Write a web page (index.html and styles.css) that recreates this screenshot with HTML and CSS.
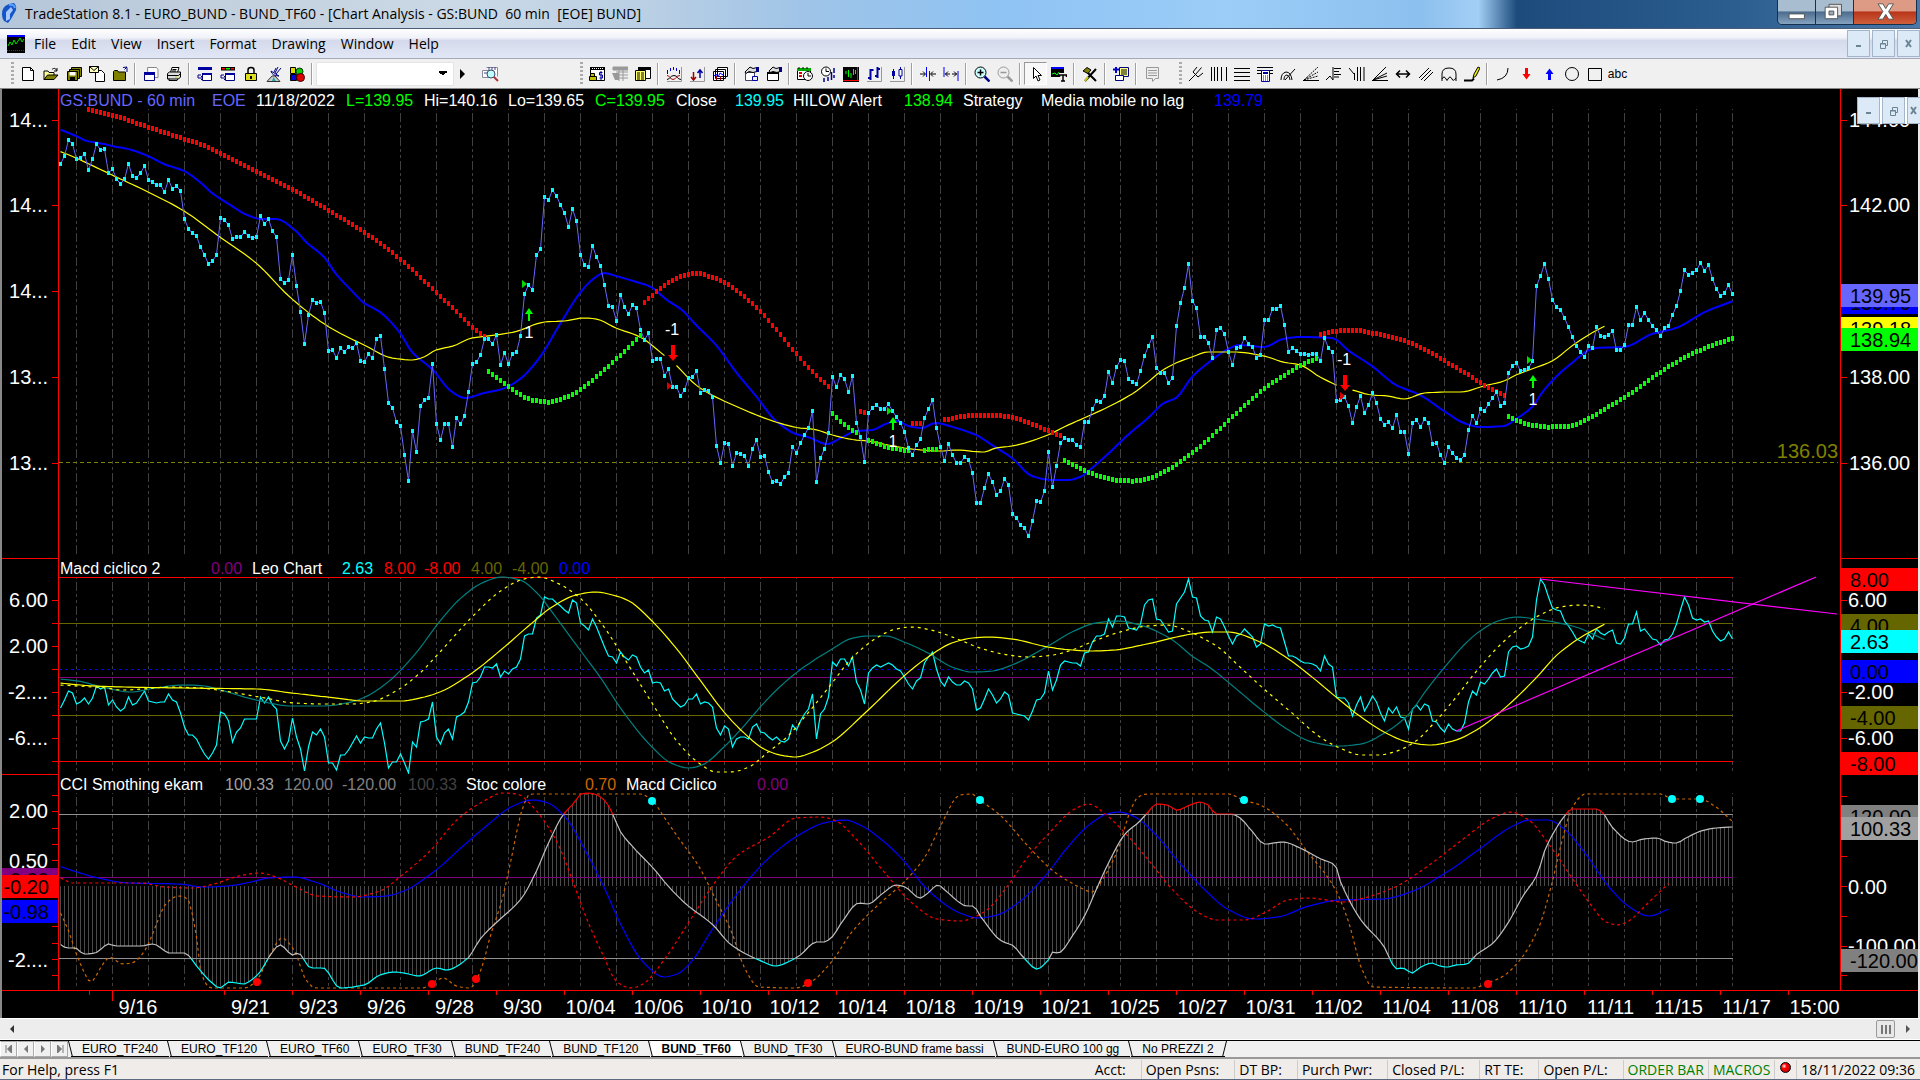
FILE: index.html
```html
<!DOCTYPE html>
<html lang="en">
<head>
<meta charset="utf-8">
<title>TradeStation 8.1 - EURO_BUND - BUND_TF60</title>
<link rel="stylesheet" href="styles.css">
</head>
<body>
<svg class="sprite" aria-hidden="true">
  <symbol id="i-new" viewBox="0 0 16 16"><path d="M2.500 1.500h8l3 3v10h-11z" fill="#fff" stroke="#000"/><path d="M10.500 1.500v3h3" fill="none" stroke="#000"/></symbol>
  <symbol id="i-open" viewBox="0 0 16 16"><path d="M1 13.500V5h4l1 1.500h5V9" fill="#ffff9c" stroke="#000"/><path d="M1 13.500L4.500 9H15l-4 4.500z" fill="#808000" stroke="#000"/><path d="M9 3.500c2-2 4-1 4.500 1M14 2v3h-3" fill="none" stroke="#000"/></symbol>
  <symbol id="i-saveall" viewBox="0 0 16 16"><path d="M5.500 1.500h10v9h-10z" fill="#808000" stroke="#000"/><path d="M3.500 3.500h10v9h-10z" fill="#808000" stroke="#000"/><path d="M1.500 5.500h10v9h-10z" fill="#808000" stroke="#000"/><path d="M3.500 6h6v3.500h-6z" fill="#fff"/><path d="M4 11h5v3.500H4z"/></symbol>
  <symbol id="i-mail" viewBox="0 0 16 16"><path d="M6.500 4.500h6l3 3v8h-9z" fill="#fff" stroke="#000"/><path d="M.500.500h9v6h-9z" fill="#ffffc0" stroke="#000"/><path d="M.500.500L5 4.500 9.500.500" fill="none" stroke="#000"/></symbol>
  <symbol id="i-folder" viewBox="0 0 16 16"><path d="M1.500 14.500v-9l1-1h3l1 1.500h7v8.500z" fill="#808000" stroke="#000"/><path d="M15 6V1.500M12.500 3.500L15 1l-4 .500" fill="none" stroke="#000080"/></symbol>
  <symbol id="i-win" viewBox="0 0 16 16"><path d="M4.500 1.500h9l1.500 2v8h-10z" fill="#fff" stroke="#888"/><path d="M1.500 6.500h10v8h-10z" fill="#fff" stroke="#000080"/><path d="M1 6h11v3H1z" fill="#0000a0"/></symbol>
  <symbol id="i-print" viewBox="0 0 16 16"><path d="M4.500 6.500l1.500-5h7l-1.500 5" fill="#fff" stroke="#000"/><path d="M1.500 7.500l2-1.500h11v5l-2 2h-11z" fill="#ddd" stroke="#000"/><path d="M1.500 9.500h11l2-2M3 12.500v2h8l1-2M6.500 3.500h4M6 5h4" fill="none" stroke="#000"/><path d="M9 11h2" stroke="#cc0"/></symbol>
  <symbol id="i-ws1" viewBox="0 0 16 16"><path d="M1 1h14v3H1z" fill="#0000a0"/><path d="M5.500 7.500h9v7h-9z" fill="#fff" stroke="#000080"/><path d="M5 7h10v2H5z" fill="#0000a0"/><path d="M1 12h5M1 12V9h3M4 10l2 2-2 2" fill="none" stroke="#000080"/></symbol>
  <symbol id="i-ws2" viewBox="0 0 16 16"><path d="M1 1h14v3.500H1z"/><path d="M2 2h3v1.500H2z" fill="#f00"/><path d="M6 2h4v1.500H6z" fill="#0f0"/><path d="M11 2h3v1.500h-3z" fill="#f00"/><path d="M5.500 7.500h9v7h-9z" fill="#fff" stroke="#000080"/><path d="M5 7h10v2H5z" fill="#0000a0"/><path d="M1 12h5M1 12V9h3M4 10l2 2-2 2" fill="none" stroke="#000080"/></symbol>
  <symbol id="i-lock" viewBox="0 0 16 16"><path d="M5 7V4q0-2.500 3-2.500T11 4v3" fill="none" stroke="#000" stroke-width="1.500"/><path d="M2.500 7.500h11v7h-11z" fill="#dede20" stroke="#000"/><path d="M7 10h2v3H7z"/></symbol>
  <symbol id="i-dish" viewBox="0 0 16 16"><path d="M1 15.500l5-5.500h3l5 5.500z" fill="#ccc" stroke="#333"/><path d="M6 15l1.500-4L10 15z" fill="#2aa"/><path d="M5 5q1 5 8 5zM9 7l3-6M10 8l5-6M8 6l2-4" fill="#eee" stroke="#000080"/></symbol>
  <symbol id="i-balls" viewBox="0 0 16 16"><path d="M1.500 1.500h5v6h-5z" fill="#dd0" stroke="#000"/><circle cx="10.500" cy="5.500" r="3.500" fill="#0c0" stroke="#030"/><path d="M1.500 8.500h6v6h-6z" fill="#00d" stroke="#000"/><circle cx="11.500" cy="11.500" r="4" fill="#d00" stroke="#300"/></symbol>
  <symbol id="i-find" viewBox="0 0 18 18"><path d="M1.500 5.500h7v7h-7zM5.500 2.500h11v9" fill="#fff" stroke="#889"/><path d="M8 2v3M11 2v3M14 2v3M3 8h4" stroke="#448"/><circle cx="10" cy="9" r="4" fill="#bff" stroke="#446"/><path d="M13 12l4 4" stroke="#a33" stroke-width="2"/></symbol>
  <symbol id="i-symmoney" viewBox="0 0 16 16"><path d="M1.500 1.500h14v13h-14z" fill="#fff" stroke="#000"/><path d="M1 1h15v3H1z"/><path d="M3 2.500h12" stroke="#fff" stroke-dasharray="1 1"/><path d="M13.500 6.500h-3v2.500h3V12h-3M12 5v9" fill="none" stroke="#0000a0"/><path d="M1.500 7.500h4v3h-4zM.500 10.500h7v4h-7z" fill="#c0c000" stroke="#000"/></symbol>
  <symbol id="i-symgray" viewBox="0 0 16 16"><path d="M1 1h15v3H1zM4 6h12M4 9h12M4 12h12M7 4v11M11 4v11" fill="#999" stroke="#999"/><path d="M0 7h7v7H3z" fill="#999"/></symbol>
  <symbol id="i-symlist" viewBox="0 0 16 16"><path d="M3.500 1.500h12v11h-12z" fill="#fff" stroke="#000"/><path d="M3 1h13v3H3z"/><path d="M.500 4.500h10v10H.500z" fill="#ffff70" stroke="#000"/><path d="M2 7h7M2 9h7M2 11h7M2 13h7" stroke="#000" stroke-dasharray="3 1"/></symbol>
  <symbol id="i-ind1" viewBox="0 0 16 16"><path d="M15.500 1v14.500H1" fill="none" stroke="#999"/><path d="M1.500 4v4M4.500 2v3M7.500 1v3M10.500 2v3M13.500 4v4" stroke="#00c"/><path d="M1 9.500c3 0 3 4 6 4s3-4 7-4" fill="none" stroke="#a00"/><path d="M1 13.500c3 0 3-4 7-4s3 4 7 4" fill="none" stroke="#000"/></symbol>
  <symbol id="i-ind2" viewBox="0 0 16 16"><path d="M15.500 1v14.500H1" fill="none" stroke="#999"/><path d="M4.500 6v8M2 11l2.500 3L7 11" fill="none" stroke="#a00000" stroke-width="1.500"/><path d="M11 12V4M8.500 7L11 4l2.500 3" fill="none" stroke="#0000a0" stroke-width="1.500"/></symbol>
  <symbol id="i-ind3" viewBox="0 0 16 16"><path d="M5.500 1.500h10v9h-10zM3.500 3.500h10v9h-10zM1.500 5.500h10v9h-10z" fill="#fff" stroke="#000"/><path d="M2 10l2-2 2 3 2-4 3 2" fill="none" stroke="#00f"/><path d="M4.500 10v4M8.500 14v-4" stroke="#a00"/></symbol>
  <symbol id="i-hand1" viewBox="0 0 16 16"><path d="M2.500 6.500h9v8h-9z" fill="#fff" stroke="#446"/><path d="M2 6l5-5 3 1.500 4-1v4l-4 1-4-1-3 2z" fill="#ddd" stroke="#000"/><path d="M13 1h3v5h-3z" fill="#000080"/><path d="M9.500 10.500h5v4h-5z" fill="#eef" stroke="#00a"/></symbol>
  <symbol id="i-hand2" viewBox="0 0 16 16"><path d="M1.500 7.500h11v7h-11z" fill="#fff" stroke="#000"/><path d="M1 6h12v2H1z"/><path d="M3 5l4-4 3 1.500 4-1v4l-3 1-4-1-3 1z" fill="#ddd" stroke="#000"/><path d="M13 1h3v5h-3z" fill="#000080"/></symbol>
  <symbol id="i-cal" viewBox="0 0 16 16"><path d="M.500 2.500h13v11H.500z" fill="#fff" stroke="#000"/><path d="M0 2h14v3H0z" fill="#0a0"/><path d="M2 7h3M2 10h3" stroke="#d00" stroke-width="2"/><circle cx="11" cy="10" r="4.500" fill="#fff" stroke="#000"/><path d="M11 7v3h3M2 1v2M6 1v2M10 1v2" fill="none" stroke="#000"/></symbol>
  <symbol id="i-clock" viewBox="0 0 16 16"><circle cx="6" cy="5.500" r="4.500" fill="#fff" stroke="#000"/><path d="M6 2.500v3h3" fill="none" stroke="#000"/><path d="M14 2v5M11.500 6v8M8 11v4M4 12v4M14 9v3" stroke="#000090" stroke-width="1.500"/></symbol>
  <symbol id="i-chart" viewBox="0 0 16 16"><path d="M0 1h16v15H0z"/><path d="M14.500 1v14M0 14.500h16" stroke="#f00"/><path d="M3 5v3M5.500 4v7M8 7v5M10.500 3v6M12.500 4v4" stroke="#0f0"/></symbol>
  <symbol id="i-bars" viewBox="0 0 16 16"><path d="M15.500 1v14.500H1" fill="none" stroke="#999"/><path d="M4.500 3v11M2 12h3M4 4h3.500M11.500 1v11M9 10h3M11 3h3" stroke="#0000a0" stroke-width="2"/></symbol>
  <symbol id="i-candle" viewBox="0 0 16 16"><path d="M15.500 1v14.500H1" fill="none" stroke="#999"/><path d="M4.500 3v10M11.500 1v12" stroke="#0000a0"/><path d="M3 5h3v5H3z" fill="#0000a0"/><path d="M10 3.500h3V10h-3z" fill="#fff" stroke="#0000a0"/></symbol>
  <symbol id="i-squeeze" viewBox="0 0 16 16"><path d="M6.500 1v10M9.500 5v10" stroke="#00f"/><path d="M0 8h5M3 5.500L5.500 8 3 10.500M16 8h-5M13 5.500L10.500 8l2.500 2.500" fill="none" stroke="#000"/></symbol>
  <symbol id="i-stretch" viewBox="0 0 16 16"><path d="M1 1v10M15 5v10" stroke="#00f"/><path d="M2 8h5M5 5.500L2.500 8 5 10.500M14 8H9M11 5.500L13.500 8 11 10.500" fill="none" stroke="#000"/></symbol>
  <symbol id="i-zoomin" viewBox="0 0 16 16"><circle cx="6.500" cy="6.500" r="5.500" fill="#cff" stroke="#000"/><path d="M3.500 6.500h6M6.500 3.500v6" stroke="#000" stroke-width="1.500"/><path d="M10.500 10.500l5 5" stroke="#000080" stroke-width="2.500"/></symbol>
  <symbol id="i-zoomout" viewBox="0 0 16 16"><circle cx="6.500" cy="6.500" r="5.500" fill="#eee" stroke="#999"/><path d="M3.500 6.500h6" stroke="#999" stroke-width="1.500"/><path d="M10.500 10.500l5 5" stroke="#999" stroke-width="2.500"/></symbol>
  <symbol id="i-pointer" viewBox="0 0 16 16"><path d="M5.500 1.500v11l2.500-2.500 2 5 2-1-2-4.500h3.500z" fill="#fff" stroke="#000"/></symbol>
  <symbol id="i-charttext" viewBox="0 0 16 16"><path d="M0 1h13v10H0z"/><path d="M0 1h13v2H0z" fill="#00f"/><path d="M1 8l3-1 2 2 2-3" fill="none" stroke="#0f0"/><path d="M8 7h8v9H8z" fill="#f0f0f0"/><path d="M8.500 11V9h7v2M12 9v6M10 15h4" fill="none" stroke="#000" stroke-width="1.500"/></symbol>
  <symbol id="i-tools" viewBox="0 0 16 16"><path d="M3 15L14 3M5 6l9 9" stroke="#000" stroke-width="2"/><path d="M1 5l4-3.500 4 2.500-3 3.500z" fill="#808000" stroke="#000"/><path d="M3 15l3-4" stroke="#cc0" stroke-width="2"/></symbol>
  <symbol id="i-addlist" viewBox="0 0 16 16"><path d="M6.500 1.500h9v9h-9z" fill="#ffff80" stroke="#000080"/><path d="M8 4h6M8 6h6M8 8h6" stroke="#000"/><path d="M0 3.500h6M3 1v6" stroke="#00c" stroke-width="2"/><path d="M2.500 9.500h8v5h-8z" fill="#fff" stroke="#000080"/></symbol>
  <symbol id="i-note" viewBox="0 0 16 16"><path d="M2.500 1.500h12v11h-3l-3 3v-3h-6z" fill="#eee" stroke="#999"/><path d="M4 4.500h9M4 7h9M4 9.500h9" stroke="#999"/></symbol>
  <symbol id="i-fork" viewBox="0 0 16 16"><path d="M1 15L8 8M5 6l5 5M5 6l4-5M7.500 8.500l6-7M10 11l5-4" fill="none" stroke="#000"/></symbol>
  <symbol id="i-vlines" viewBox="0 0 16 16"><path d="M.500 1v14M3.500 1v14M6.500 1v14M10.500 1v14M15.500 1v14" stroke="#000"/></symbol>
  <symbol id="i-hlines" viewBox="0 0 16 16"><path d="M0 2.500h16M0 6.500h16M0 10.500h16M0 14.500h16" stroke="#000"/></symbol>
  <symbol id="i-calc" viewBox="0 0 16 16"><path d="M0 1.500h16M0 4.500h16M0 7.500h16" stroke="#000"/><path d="M4.500 4.500h8v11h-8z" fill="#fff" stroke="#0000a0"/><path d="M6 6h5v2H6z" fill="#0000a0"/><path d="M6 10h5M6 12h5M6 14h5" stroke="#0000a0" stroke-dasharray="1 1"/></symbol>
  <symbol id="i-arcs" viewBox="0 0 16 16"><path d="M1 14q0-7 5-8 5 0 6 8M4 14q0-5 3-5 3 1 3 5M5 14L15 3" fill="none" stroke="#000"/></symbol>
  <symbol id="i-fan" viewBox="0 0 16 16"><path d="M0 14.500h16" stroke="#000"/><path d="M1 14L15 1M1 14l14-8M1 14l14-4" stroke="#000" stroke-dasharray="2 1"/></symbol>
  <symbol id="i-ext" viewBox="0 0 16 16"><path d="M0 14l4-4 3 4V1M8 2.500h7M8 5.500h5M8 8.500h7M8 11h5" fill="none" stroke="#000"/></symbol>
  <symbol id="i-timeext" viewBox="0 0 16 16"><path d="M0 2l5 6M5.500 14V7M8.500 1v14M11.500 1v14M15 1v14" fill="none" stroke="#000"/></symbol>
  <symbol id="i-gann" viewBox="0 0 16 16"><path d="M0 14.500h16M1 14L14 1M1 14l14-7M1 14l14-4" stroke="#000"/></symbol>
  <symbol id="i-harrow" viewBox="0 0 16 16"><path d="M1 8h14M5 4.500L1.500 8 5 11.500M11 4.500L14.500 8 11 11.500" fill="none" stroke="#000" stroke-width="1.500"/></symbol>
  <symbol id="i-parallel" viewBox="0 0 16 16"><path d="M1 12L11 2M3 14L13 4M6 15l9-9" stroke="#000"/></symbol>
  <symbol id="i-cycle" viewBox="0 0 16 16"><path d="M1 15V8q0-6 7-6t7 6v7M1 13q2-4 4 0 1 3 2 0 2-4 4 0 1 3 4-1" fill="none" stroke="#000"/></symbol>
  <symbol id="i-pencil" viewBox="0 0 16 16"><path d="M0 14.500h8l2-2" fill="none" stroke="#000" stroke-width="2"/><path d="M9 12l1-4 4-7 2 1-4 8z" fill="#ee0" stroke="#000"/></symbol>
  <symbol id="i-arc" viewBox="0 0 16 16"><path d="M13 2q0 10-11 12" fill="none" stroke="#000"/></symbol>
  <symbol id="i-down" viewBox="0 0 16 16"><path d="M7 2h3v6h2.500L8.500 13.500 4.500 8H7z" fill="#f00"/></symbol>
  <symbol id="i-up" viewBox="0 0 16 16"><path d="M7 14h3V8h2.500L8.500 2.500 4.500 8H7z" fill="#00f"/></symbol>
  <symbol id="i-circle" viewBox="0 0 16 16"><circle cx="8" cy="8" r="6.500" fill="none" stroke="#000"/></symbol>
  <symbol id="i-rect" viewBox="0 0 16 16"><path d="M1.500 2.500h13v12h-13z" fill="none" stroke="#000"/></symbol>
  <symbol id="w-min" viewBox="0 0 12 12"><path d="M3 7h5v2H3z" fill="#6b8494"/></symbol>
  <symbol id="w-res" viewBox="0 0 12 12"><path d="M4.500 5V2.500h5v5H8M2.500 5.500h5v5h-5zM2 6h6" fill="none" stroke="#6b8494"/></symbol>
  <symbol id="w-close" viewBox="0 0 12 12"><path d="M3 2l5 7M8 2L3 9" stroke="#6b8494" stroke-width="2"/></symbol>
</svg>

<header class="titlebar">
  <svg class="logo" viewBox="0 0 18 22" aria-hidden="true"><path d="M2 12Q1 4 9 1l5-1q4 4 1 9l-4 7-3 4-4-2q-2-3-2-6z" fill="#1456c8"/><path d="M6 18V9l5-5 2 3-3 4v5z" fill="#a8c8ff"/><path d="M9 2q5-1 6 3" fill="none" stroke="#58a0ff" stroke-width="2"/></svg>
  <h1>TradeStation 8.1 - EURO_BUND - BUND_TF60 - [Chart Analysis - GS:BUND&nbsp; 60 min&nbsp; [EOE] BUND]</h1>
  <div class="winbuttons">
    <button aria-label="Minimize"><svg viewBox="0 0 36 25"><path d="M10.500 14.500h16v5h-16z" fill="#fff" stroke="#555"/></svg></button>
    <button aria-label="Restore"><svg viewBox="0 0 36 25"><path d="M12.500 4.500h13v12h-13z" fill="#ddd" stroke="#555"/><path d="M8.500 7.500h13v12h-13z" fill="#fff" stroke="#555"/><path d="M12.500 11.500h5v4h-5z" fill="#9ab" stroke="#555"/></svg></button>
    <button class="close" aria-label="Close"><svg viewBox="0 0 60 25"><path d="M23 4h5l3 5 3-5h5l-5 8 5 8h-5l-3-5-3 5h-5l5-8z" fill="#fff" stroke="#555"/></svg></button>
  </div>
</header>

<nav class="menubar">
  <svg class="mdi-icon" viewBox="0 0 18 18" aria-hidden="true"><path d="M0 0h18v18H0z"/><path d="M0 0h18v2H0z" fill="#00f"/><path d="M0 15.500h18" stroke="#c00" stroke-dasharray="1 1"/><path d="M1 11l2-4 2 3 2-5 2 4 2-3 2-3 2 4 2-3" fill="none" stroke="#0d0"/></svg>
  <button>File</button><button>Edit</button><button>View</button><button>Insert</button><button>Format</button><button>Drawing</button><button>Window</button><button>Help</button>
  <div class="mdi">
    <button aria-label="Minimize chart"><svg><use href="#w-min"/></svg></button><button aria-label="Restore chart"><svg><use href="#w-res"/></svg></button><button aria-label="Close chart"><svg><use href="#w-close"/></svg></button>
  </div>
</nav>

<div class="toolbars">
  <div class="toolbar main">
    <i class="grip"></i>
    <button aria-label="New"><svg><use href="#i-new"/></svg></button><button aria-label="Open"><svg><use href="#i-open"/></svg></button><button aria-label="Save all"><svg><use href="#i-saveall"/></svg></button><button aria-label="Import"><svg><use href="#i-mail"/></svg></button><button aria-label="Close folder"><svg><use href="#i-folder"/></svg></button>
    <i class="sep"></i>
    <button aria-label="New window"><svg><use href="#i-win"/></svg></button><button aria-label="Print"><svg><use href="#i-print"/></svg></button>
    <i class="sep"></i>
    <button aria-label="Arrange"><svg><use href="#i-ws1"/></svg></button><button aria-label="Arrange colors"><svg><use href="#i-ws2"/></svg></button><button aria-label="Lock"><svg><use href="#i-lock"/></svg></button><button aria-label="Data feed"><svg><use href="#i-dish"/></svg></button><button aria-label="Objects"><svg><use href="#i-balls"/></svg></button>
    <i class="sep"></i>
    <select aria-label="Symbol"><option></option></select>
    <button class="go" aria-label="Go"><svg viewBox="0 0 8 12"><path d="M1 1l5 5-5 5z"/></svg></button>
    <button class="lookup" aria-label="Symbol lookup"><svg><use href="#i-find"/></svg></button>
  </div>
  <div class="toolbar analysis">
    <i class="grip"></i>
    <button aria-label="Trading"><svg><use href="#i-symmoney"/></svg></button><button aria-label="Grid" disabled><svg><use href="#i-symgray"/></svg></button><button aria-label="List"><svg><use href="#i-symlist"/></svg></button>
    <i class="sep"></i>
    <button aria-label="Indicator"><svg><use href="#i-ind1"/></svg></button><button aria-label="Signals"><svg><use href="#i-ind2"/></svg></button><button aria-label="Studies"><svg><use href="#i-ind3"/></svg></button>
    <i class="sep"></i>
    <button aria-label="Format symbol"><svg><use href="#i-hand1"/></svg></button><button aria-label="Format window"><svg><use href="#i-hand2"/></svg></button>
    <i class="sep"></i>
    <button aria-label="Sessions"><svg><use href="#i-cal"/></svg></button><button aria-label="Interval"><svg><use href="#i-clock"/></svg></button><button aria-label="Chart"><svg><use href="#i-chart"/></svg></button><button aria-label="Bars"><svg><use href="#i-bars"/></svg></button><button aria-label="Candles"><svg><use href="#i-candle"/></svg></button>
    <i class="sep"></i>
    <button aria-label="Decrease spacing"><svg><use href="#i-squeeze"/></svg></button><button aria-label="Increase spacing"><svg><use href="#i-stretch"/></svg></button>
    <i class="sep"></i>
    <button aria-label="Zoom in"><svg><use href="#i-zoomin"/></svg></button><button aria-label="Zoom out" disabled><svg><use href="#i-zoomout"/></svg></button>
    <i class="sep"></i>
    <button class="pressed" aria-label="Pointer"><svg><use href="#i-pointer"/></svg></button><button aria-label="Chart text"><svg><use href="#i-charttext"/></svg></button>
    <i class="sep"></i>
    <button aria-label="Tools"><svg><use href="#i-tools"/></svg></button>
    <i class="sep"></i>
    <button aria-label="Add list"><svg><use href="#i-addlist"/></svg></button>
    <i class="sep"></i>
    <button aria-label="Note" disabled><svg><use href="#i-note"/></svg></button>
  </div>
  <div class="toolbar drawing">
    <i class="grip"></i>
    <button aria-label="Pitchfork"><svg><use href="#i-fork"/></svg></button><button aria-label="Vertical lines"><svg><use href="#i-vlines"/></svg></button><button aria-label="Horizontal lines"><svg><use href="#i-hlines"/></svg></button><button aria-label="Calculator"><svg><use href="#i-calc"/></svg></button><button aria-label="Arcs"><svg><use href="#i-arcs"/></svg></button><button aria-label="Fan"><svg><use href="#i-fan"/></svg></button><button aria-label="Price extension"><svg><use href="#i-ext"/></svg></button><button aria-label="Time extension"><svg><use href="#i-timeext"/></svg></button><button aria-label="Gann fan"><svg><use href="#i-gann"/></svg></button><button aria-label="Horizontal line"><svg><use href="#i-harrow"/></svg></button><button aria-label="Parallel"><svg><use href="#i-parallel"/></svg></button><button aria-label="Cycle"><svg><use href="#i-cycle"/></svg></button><button aria-label="Pencil"><svg><use href="#i-pencil"/></svg></button>
    <i class="sep"></i>
    <button aria-label="Arc"><svg><use href="#i-arc"/></svg></button><button aria-label="Down arrow"><svg><use href="#i-down"/></svg></button><button aria-label="Up arrow"><svg><use href="#i-up"/></svg></button><button aria-label="Ellipse"><svg><use href="#i-circle"/></svg></button><button aria-label="Rectangle"><svg><use href="#i-rect"/></svg></button><button class="abc">abc</button>
  </div>
</div>

<main class="chart">
  <section class="panel price">
    <svg id="price" role="img" aria-label="Price chart"></svg>
    <p class="legend legend-price"><span class="c-sym">GS:BUND - 60 min</span><span class="c-sym">EOE</span><span>11/18/2022</span><span class="c-green">L=139.95</span><span>Hi=140.16</span><span>Lo=139.65</span><span class="c-green">C=139.95</span><span>Close</span><span class="c-cyan">139.95</span><span>HILOW Alert</span><span class="c-green">138.94</span><span>Strategy</span><span>Media mobile no lag</span><span class="c-blue">139.79</span></p>
  </section>
  <section class="panel macd">
    <svg id="macd" role="img" aria-label="Leo Chart"></svg>
    <p class="legend legend-macd"><span>Macd ciclico 2</span><span class="c-purple">0.00</span><span>Leo Chart</span><span class="c-cyan">2.63</span><span class="c-red">8.00</span><span class="c-red">-8.00</span><span class="c-olive">4.00</span><span class="c-olive">-4.00</span><span class="c-blue">0.00</span></p>
  </section>
  <section class="panel cci">
    <svg id="cci" role="img" aria-label="CCI"></svg>
    <p class="legend legend-cci"><span>CCI Smothing ekam</span><span class="c-gray">100.33</span><span class="c-midgray">120.00</span><span class="c-midgray">-120.00</span><span class="c-dark">100.33</span><span>Stoc colore</span><span class="c-orange">0.70</span><span>Macd Ciclico</span><span class="c-purple">0.00</span></p>
  </section>
  <section class="panel dates">
    <svg id="dates" role="img" aria-label="Dates"></svg>
  </section>
  <div class="mdi floating">
    <button aria-label="Minimize"><svg><use href="#w-min"/></svg></button><button aria-label="Restore"><svg><use href="#w-res"/></svg></button><button aria-label="Close"><svg><use href="#w-close"/></svg></button>
  </div>
</main>

<div class="hscroll">
  <button aria-label="Scroll left"><svg viewBox="0 0 8 10"><path d="M6 1L2 5l4 4z" fill="#333"/></svg></button>
  <div class="track"><span class="thumb"></span></div>
  <button aria-label="Scroll right"><svg viewBox="0 0 8 10"><path d="M2 1l4 4-4 4z" fill="#555"/></svg></button>
</div>

<div class="tabs">
  <div class="tabnav">
    <button aria-label="First"><svg viewBox="0 0 10 10"><path d="M2 1v8M7.500 1v8L3.500 5z" fill="#777" stroke="#777"/></svg></button><button aria-label="Previous"><svg viewBox="0 0 10 10"><path d="M7 1v8L3 5z" fill="#777"/></svg></button><button aria-label="Next"><svg viewBox="0 0 10 10"><path d="M3 1v8l4-4z" fill="#777"/></svg></button><button aria-label="Last"><svg viewBox="0 0 10 10"><path d="M8 1v8M2.500 1v8l4-4z" fill="#777" stroke="#777"/></svg></button>
  </div>
  <div class="tablist">
    <button>EURO_TF240</button><button>EURO_TF120</button><button>EURO_TF60</button><button>EURO_TF30</button><button>BUND_TF240</button><button>BUND_TF120</button><button class="active">BUND_TF60</button><button>BUND_TF30</button><button>EURO-BUND frame bassi</button><button>BUND-EURO 100 gg</button><button>No PREZZI 2</button>
  </div>
</div>

<footer class="status">
  <span class="help">For Help, press F1</span>
  <div class="fields">
    <span>Acct:</span><span>Open Psns:</span><span>DT BP:</span><span>Purch Pwr:</span><span>Closed P/L:</span><span>RT TE:</span><span>Open P/L:</span><span class="on">ORDER BAR</span><span class="on">MACROS</span><span class="led"><i></i></span><span>18/11/2022 09:36</span>
  </div>
</footer>
<script src="chart.js"></script>
</body>
</html>
```

FILE: styles.css
```css
* { box-sizing: border-box; }
body {
  margin: 0;
  height: 100vh;
  display: flex;
  flex-direction: column;
  overflow: hidden;
  background: #f0f0f0;
  font: 14px/18px "Open Sans", "Noto Sans", sans-serif;
  color: #000;
}
button {
  margin: 0;
  padding: 0;
  border: 0;
  background: none;
  font: inherit;
  color: inherit;
}
svg { display: block; }
.sprite { position: absolute; width: 0; height: 0; }

/* title bar */
.titlebar {
  flex: none;
  display: flex;
  align-items: center;
  height: 29px;
  border-bottom: 1px solid #4b5d75;
  background: linear-gradient(90deg, #b4c6da 0, #c3d0de 12%, #cbd9e6 24%, #b9cfe4 34%, #9fc4e8 42%, #8fc3f3 52%, #9ccdf8 64%, #8cc0ee 74%, #a3cff5 77%, #1d4b7c 79%, #2b5d8f 90%, #4a78a8 100%);
}
.logo { width: 18px; height: 22px; }
.titlebar h1 { flex: 1; margin: 0 0 0 7px; font-size: 14px; line-height: 20px; font-weight: 400; white-space: nowrap; }
.winbuttons {
  display: flex;
  align-self: flex-start;
  height: 25px;
  margin-right: 3px;
  border: 1px solid #17304d;
  border-top: 0;
  border-radius: 0 0 5px 5px;
  overflow: hidden;
}
.winbuttons button { width: 38px; border-right: 1px solid #17304d; background: linear-gradient(#a9bdd1 45%, #4c6c8e 50%, #86a3bf); }
.winbuttons .close { width: 62px; border: 0; background: linear-gradient(#dd9a84 45%, #b8341a 50%, #d0603c); }
.winbuttons svg { height: 24px; margin: auto; }

/* menu bar */
.menubar {
  flex: none;
  display: flex;
  align-items: center;
  gap: 1px;
  height: 30px;
  padding-left: 7px;
  border-bottom: 1px solid #a5a8b5;
  background: linear-gradient(#fff, #f0f2f9 30%, #d4daeb 40%, #e2e7f6);
}
.mdi-icon { width: 18px; height: 18px; margin-right: 1px; }
.menubar > button { padding: 0 7px; white-space: nowrap; }
.mdi { display: flex; gap: 2px; }
.menubar .mdi { margin-left: auto; }
.mdi button {
  display: grid;
  place-items: center;
  width: 23px;
  height: 27px;
  border: 1px solid #a3b5ca;
  background: #dceaf8;
}
.mdi svg { width: 12px; height: 12px; }
.floating { position: absolute; top: 8px; right: 0; background: #fff; }
.floating button:last-child { width: 13px; border-right: 0; }

/* toolbars */
.toolbars { flex: none; display: flex; height: 30px; border-bottom: 1px solid #888; background: #f0f0f0; }
.toolbar { display: flex; align-items: center; }
.main { width: 577px; padding-left: 8px; }
.analysis { width: 599px; }
.toolbar button { flex: none; display: grid; place-items: center; width: 23px; height: 23px; }
.toolbar button svg { width: 16px; height: 16px; }
.toolbar .pressed { border: 1px solid; border-color: #999 #fff #fff #999; background: #f8f8f8; }
.sep { flex: none; width: 2px; height: 22px; margin: 0 3px; border-left: 1px solid #a0a0a0; border-right: 1px solid #fff; }
.grip { flex: none; width: 3px; height: 24px; margin: 0 2px 0 3px; background: repeating-linear-gradient(#aaa 0 2px, transparent 2px 4px); }
.toolbar select {
  appearance: none;
  width: 138px;
  height: 24px;
  border: 1px solid #e4e4e4;
  background-color: #fff;
  background-image: linear-gradient(to bottom left, #000 50%, transparent 50%), linear-gradient(to bottom right, #000 50%, transparent 50%);
  background-position: right 10px center, right 5px center;
  background-size: 5px 5px;
  background-repeat: no-repeat;
}
.toolbar .go { width: 18px; }
.toolbar .go svg { width: 8px; height: 12px; }
.toolbar .lookup { margin-left: 6px; }
.toolbar .lookup svg { width: 18px; height: 18px; }
.toolbar .abc { font: 12px/16px "Liberation Sans", Arial, sans-serif; }

/* chart */
.chart {
  position: relative;
  flex: 1;
  min-height: 0;
  display: flex;
  flex-direction: column;
  background: #000;
  font-family: "Liberation Sans", Arial, sans-serif;
}
.panel { min-height: 0; flex: 216 1 0; display: grid; grid-template: minmax(0, 1fr) / minmax(0, 1fr); }
.panel.price { flex-grow: 469; }
.panel.dates { flex-grow: 28; }
.panel > * { grid-area: 1 / 1; }
.panel svg { width: 100%; height: 100%; font-size: 20px; }
.panel svg .mark { font-size: 16px; fill: #fff; }
.legend { align-self: start; display: grid; margin: 0; padding-left: 60px; font-size: 16px; line-height: 22px; color: #fff; white-space: nowrap; }
.legend-price { grid-template-columns: 152px 44px 90px 78px 84px 87px 81px 59px 58px 111px 59px 78px 173px auto; line-height: 24px; }
.legend-macd { grid-template-columns: 151px 41px 90px 42px 40px 47px 41px 47px auto; }
.legend-cci { grid-template-columns: 165px 59px 58px 66px 58px 119px 41px 131px auto; }
.c-sym { color: #6666ff; }
.c-green { color: #00ff00; }
.c-cyan { color: #00ffff; }
.c-blue { color: #0000ff; }
.c-purple { color: #800080; }
.c-red { color: #ff0000; }
.c-olive { color: #666600; }
.c-gray { color: #a0a0a0; }
.c-midgray { color: #808080; }
.c-dark { color: #404040; }
.c-orange { color: #cc6600; }

/* scroll bar */
.hscroll { flex: none; display: flex; height: 22px; border: solid #fff; border-width: 1px 0; background: #ededed; }
.hscroll button { display: grid; place-items: center; width: 23px; }
.hscroll button:last-child { width: 25px; }
.hscroll button svg { width: 8px; height: 10px; }
.track { flex: 1; display: flex; justify-content: flex-end; padding: 1px 0; }
.thumb { width: 19px; border: 1px solid #999; border-radius: 2px; background: repeating-linear-gradient(90deg, #777 0 2px, transparent 2px 4px) center / 10px 9px no-repeat, #e8e8e8; }

/* workspace tabs */
.tabs { flex: none; display: flex; height: 19px; border-top: 1px solid #000; border-bottom: 2px solid #999; font: 12px/16px "Liberation Sans", Arial, sans-serif; }
.tabnav { display: flex; width: 71px; }
.tabnav button { display: grid; place-items: center; width: 17px; border: 1px solid #aaa; border-left-color: #fff; }
.tabnav svg { width: 10px; height: 10px; }
.tablist { display: flex; gap: 1px; }
.tablist button { position: relative; padding: 0 11px; border-bottom: 1px solid #000; white-space: nowrap; }
.tablist button::before, .tablist button:last-child::after { content: ""; position: absolute; top: 0; left: -1px; height: 16px; border-left: 1px solid #000; transform: skewX(14deg); }
.tablist button:last-child::after { left: auto; right: 0; transform: skewX(-14deg); }
.tablist .active { background: #fff; font-weight: 700; }

/* status bar */
.status { flex: none; display: flex; justify-content: space-between; height: 21px; padding: 1px 2px 0; border-bottom: 1px solid #5b6a80; background: #f0ecea; line-height: 20px; white-space: nowrap; }
.fields { display: flex; }
.fields span { padding: 0 15px 0 4px; border-left: 1px solid #ccc; }
.fields span:first-child { border: 0; }
.fields .on { padding-right: 4px; color: #008000; }
.fields .led { padding: 2px 5px; }
.fields .led i { display: block; width: 11px; height: 11px; border: 1px solid #000; border-radius: 50%; background: radial-gradient(circle at 35% 35%, #fff, #f00 30%, #a00); }
.fields span:last-child { padding-right: 3px; }
```

FILE: chart.js
```js
// Chart units: x runs 0..1920 across the window, y is the screen row of each series.
const FIRST_X = 60.5, STEP = 4, BARS = 419;
const RED = '#ff0000', OLIVE = '#666600', CYAN = '#00ffff', BLUE = '#0000ff';

const close = [164,156,140,144,159,158,154,170,159,144,150,149,173,169,179,184,179,164,176,178,173,166,180,182,185,185,192,180,189,186,191,219,229,233,236,247,255,264,261,255,218,220,225,239,237,237,232,236,238,237,216,224,219,231,237,279,283,280,255,286,312,344,315,300,303,302,313,351,350,358,348,352,347,348,343,361,362,354,358,339,336,369,403,408,422,426,455,481,431,452,406,400,398,364,424,440,424,424,447,418,424,416,392,364,362,355,339,339,344,335,365,353,364,354,352,336,294,285,290,255,249,197,200,190,196,205,213,227,209,221,255,265,267,246,257,266,285,306,307,321,295,307,314,305,308,330,340,333,361,359,359,376,369,387,387,396,390,378,377,371,393,390,391,397,446,463,443,444,466,453,454,456,466,449,440,457,456,472,482,481,484,477,473,447,453,443,435,428,411,482,458,449,433,377,387,375,379,392,376,423,437,462,413,408,405,409,409,404,411,417,423,432,448,455,445,439,418,409,400,428,447,461,444,455,463,463,457,460,473,503,503,488,474,482,495,491,479,485,514,518,525,528,536,521,501,502,491,452,487,466,443,438,440,440,445,447,422,422,409,401,402,396,372,383,367,360,361,379,382,384,371,356,346,337,368,373,373,383,378,326,303,288,264,301,308,337,337,343,358,330,328,334,352,365,348,347,338,344,347,358,355,320,320,309,309,306,325,352,348,351,354,354,355,354,354,361,338,348,352,401,400,397,406,423,407,396,413,405,393,403,419,425,422,428,415,432,432,454,423,420,427,419,423,444,443,455,463,447,453,458,460,455,430,416,423,409,411,404,398,392,406,403,373,366,363,371,370,368,361,286,276,264,279,300,307,310,318,327,337,346,352,357,346,348,327,336,337,335,331,350,350,345,325,325,307,320,313,320,326,330,336,328,326,315,306,291,270,275,273,270,263,271,265,279,289,296,293,285,294];

const leo = [708,700,691,693,704,702,698,704,698,686,689,687,705,700,707,711,708,697,705,703,697,691,701,702,703,702,702,694,700,702,713,727,735,735,739,747,754,759,753,745,712,714,721,742,732,728,719,719,719,719,697,703,697,705,709,741,749,741,718,737,749,771,747,732,735,729,737,763,763,770,755,755,750,743,736,743,737,738,738,729,723,743,768,762,762,754,763,773,742,747,722,721,719,702,737,744,733,729,739,717,715,712,702,683,682,677,667,667,668,664,677,671,674,669,667,659,636,634,634,618,615,597,599,599,603,606,610,613,600,603,623,626,630,619,627,637,647,656,657,663,652,657,660,655,657,667,673,670,683,682,683,691,689,699,703,707,705,699,699,694,704,702,703,707,728,735,726,729,747,739,737,737,739,727,724,732,733,737,740,737,741,742,739,725,730,721,714,709,694,739,714,709,697,662,666,659,659,666,657,682,690,704,673,668,665,667,665,663,665,669,671,677,684,689,681,678,663,657,652,669,681,686,677,682,685,685,681,683,689,710,708,699,689,695,703,699,692,695,713,714,715,716,720,711,700,699,693,671,690,680,665,661,662,663,663,666,653,652,642,636,636,634,619,627,616,616,617,628,629,630,624,605,600,599,619,620,626,632,631,604,598,592,579,597,598,616,620,621,632,617,619,627,636,644,636,634,629,633,637,647,644,624,626,625,627,628,642,656,656,658,661,663,663,664,666,671,656,664,667,697,698,698,703,716,705,697,711,704,696,702,713,721,708,713,707,717,718,729,709,705,710,704,706,721,722,728,732,724,729,731,731,723,702,691,695,682,684,679,673,669,677,676,652,647,646,649,648,646,637,600,579,585,597,608,610,611,621,626,632,639,641,643,634,639,629,633,635,632,630,643,644,638,624,624,612,631,629,634,639,640,645,640,639,634,624,610,597,605,618,620,619,622,621,631,637,641,639,632,639];

const maBlue = [[59,129],[76,136],[87,141],[104,144],[112,146],[128,149],[148,156],[164,164],[184,171],[200,182],[212,193],[232,206],[245,214],[261,219],[276,219],[296,231],[306,242],[324,257],[336,274],[351,290],[364,303],[380,312],[400,333],[412,352],[432,369],[452,392],[465,398],[484,393],[502,389],[520,379],[540,357],[560,324],[580,293],[592,280],[604,273],[616,276],[633,281],[651,287],[667,300],[682,310],[696,325],[716,345],[736,372],[756,396],[776,421],[796,434],[808,437],[827,444],[841,438],[856,431],[872,430],[888,423],[898,421],[908,426],[922,428],[935,423],[956,428],[976,435],[992,445],[1012,458],[1032,476],[1052,480],[1068,480],[1080,477],[1092,468],[1110,452],[1129,434],[1148,418],[1164,403],[1176,398],[1192,377],[1208,363],[1228,349],[1239,345],[1264,347],[1283,339],[1300,337],[1332,338],[1349,351],[1372,366],[1396,385],[1420,395],[1444,411],[1464,423],[1480,427],[1504,426],[1516,419],[1532,407],[1544,390],[1567,367],[1596,348],[1624,347],[1652,334],[1676,328],[1705,312],[1733,301]];
const maYellow = [
  [[59,151],[76,158],[112,175],[148,192],[184,211],[220,237],[256,263],[292,299],[329,327],[364,345],[392,358],[412,360],[424,357],[436,350],[453,346],[472,338],[488,336],[514,332],[545,322],[564,321],[584,318],[596,319],[616,328],[640,337],[665,356]],
  [[673,362],[700,388],[740,408],[776,422],[800,428],[812,429],[836,436],[856,440],[868,441],[888,445],[912,449],[940,451],[956,450],[984,452],[996,448],[1012,446],[1048,435],[1064,427],[1084,418],[1108,407],[1132,394],[1148,382],[1160,372],[1176,363],[1192,357],[1208,352],[1234,352],[1264,356],[1283,362],[1300,365],[1320,377],[1338,386]],
  [[1352,390],[1372,395],[1388,396],[1404,399],[1425,393],[1448,392],[1460,392],[1484,386],[1504,381],[1516,375],[1532,369],[1552,361],[1572,346],[1590,334],[1605,326]]];
const dotsRed = [
  [[88,109],[112,115],[148,127],[184,139],[200,144],[220,153],[256,171],[292,189],[328,210],[364,232],[384,246],[400,259],[416,273],[436,292],[456,311],[472,327],[485,337]],
  [[644,303],[656,292],[668,283],[680,277],[696,273],[708,276],[724,282],[740,293],[760,311],[780,334],[800,358],[812,371],[829,387]],
  [[860,411],[865,413]],[[912,424],[921,423]],
  [[944,420],[960,417],[980,415],[1004,416],[1024,421],[1044,429],[1061,436]],
  [[1320,335],[1332,332],[1352,330],[1372,333],[1392,337],[1408,342],[1428,351],[1448,363],[1464,372],[1484,385],[1505,396]]];
const dotsGreen = [
  [[488,371],[500,380],[516,392],[532,400],[547,402],[564,398],[580,390],[596,377],[612,363],[641,335]],
  [[832,413],[844,424],[857,433]],[[868,440],[888,447],[909,451]],[[924,450],[937,449]],
  [[1064,460],[1076,466],[1096,475],[1116,480],[1132,481],[1148,479],[1164,472],[1180,462],[1196,450],[1212,436],[1228,421],[1264,389],[1300,366],[1317,358]],
  [[1508,416],[1516,420],[1532,425],[1548,427],[1568,426],[1588,419],[1608,407],[1628,395],[1648,381],[1668,367],[1688,356],[1708,347],[1733,338]]];

const macdYellow = [[59,683],[94,686],[124,687],[184,688],[256,689],[292,693],[336,698],[364,701],[402,701],[420,698],[440,692],[472,673],[502,649],[532,623],[552,607],[576,595],[596,592],[616,596],[629,601],[652,621],[676,648],[700,680],[724,712],[743,732],[764,749],[780,755],[796,757],[808,754],[832,742],[865,713],[904,676],[928,657],[952,643],[972,638],[988,637],[1012,639],[1048,647],[1072,650],[1092,651],[1114,650],[1147,644],[1192,634],[1212,632],[1228,632],[1260,642],[1287,658],[1312,677],[1336,697],[1361,717],[1386,733],[1408,742],[1430,745],[1453,741],[1478,729],[1505,708],[1536,678],[1558,654],[1583,636],[1605,624]];
const macdTeal = [[59,679],[78,681],[102,687],[131,692],[155,688],[184,685],[204,686],[224,691],[256,700],[292,706],[322,706],[347,703],[363,698],[388,682],[416,653],[440,621],[461,598],[482,583],[502,577],[520,580],[539,595],[552,612],[580,650],[600,677],[624,713],[652,747],[671,763],[689,768],[702,765],[724,747],[743,727],[763,704],[784,683],[804,667],[829,651],[853,638],[869,636],[886,636],[904,642],[928,653],[952,667],[972,672],[992,671],[1012,665],[1048,646],[1072,632],[1096,623],[1118,621],[1143,626],[1171,639],[1192,656],[1212,669],[1228,682],[1264,712],[1287,729],[1312,742],[1338,746],[1361,744],[1386,732],[1407,716],[1428,688],[1444,668],[1464,645],[1480,631],[1498,621],[1517,617],[1536,619],[1554,622],[1576,627],[1605,640]];
const macdDashed = [[59,685],[78,686],[106,688],[122,690],[143,689],[167,687],[200,688],[224,691],[265,698],[294,703],[327,704],[351,704],[371,702],[396,691],[420,673],[440,652],[472,617],[502,590],[524,579],[539,577],[555,582],[580,598],[604,627],[624,658],[652,703],[676,740],[700,764],[716,772],[731,772],[749,767],[767,753],[788,736],[808,713],[829,687],[853,657],[878,637],[896,629],[912,627],[931,630],[955,638],[980,648],[1008,655],[1029,657],[1053,655],[1072,650],[1094,641],[1120,632],[1147,626],[1167,625],[1188,631],[1208,641],[1218,647],[1241,668],[1264,689],[1292,713],[1320,737],[1342,749],[1361,755],[1379,755],[1397,751],[1416,741],[1434,723],[1453,701],[1475,673],[1498,647],[1521,627],[1542,614],[1560,607],[1581,605],[1593,606],[1605,609]];

const cciLine = [[59,943],[64,947],[69,948],[75,948],[84,954],[95,953],[109,944],[115,946],[141,946],[153,944],[170,953],[184,953],[199,969],[211,982],[220,988],[229,982],[244,984],[250,981],[260,972],[269,957],[280,945],[293,955],[298,953],[311,968],[323,968],[340,988],[364,985],[380,975],[395,972],[404,973],[419,976],[437,968],[446,970],[467,959],[481,938],[497,922],[521,899],[536,872],[548,844],[563,815],[574,803],[581,794],[589,793],[597,795],[606,802],[614,817],[620,831],[634,848],[654,869],[669,887],[686,904],[713,925],[729,943],[744,953],[759,960],[776,966],[790,961],[799,956],[817,942],[824,942],[832,937],[842,922],[859,903],[868,904],[882,894],[896,885],[905,887],[920,898],[928,893],[938,885],[946,891],[960,903],[966,906],[973,906],[981,917],[1000,940],[1006,943],[1012,945],[1024,958],[1037,969],[1049,959],[1053,952],[1058,953],[1073,935],[1086,913],[1096,890],[1110,860],[1125,834],[1139,822],[1149,811],[1156,804],[1167,805],[1177,810],[1190,805],[1200,802],[1208,805],[1216,814],[1231,814],[1240,818],[1251,830],[1265,844],[1283,842],[1300,848],[1321,859],[1335,865],[1341,883],[1361,920],[1383,945],[1397,969],[1402,968],[1413,973],[1419,968],[1433,963],[1439,966],[1449,967],[1455,965],[1467,964],[1476,955],[1493,943],[1508,923],[1523,896],[1537,875],[1545,850],[1554,832],[1563,818],[1572,809],[1597,809],[1603,813],[1612,827],[1632,842],[1643,839],[1658,838],[1664,841],[1676,843],[1686,838],[1701,831],[1716,828],[1733,827]];
const cciBlue = [[59,866],[77,872],[98,878],[129,883],[178,884],[205,887],[227,886],[251,882],[269,878],[294,877],[318,883],[343,893],[364,897],[386,896],[404,891],[436,870],[462,847],[490,823],[511,807],[533,800],[548,803],[566,818],[585,850],[603,885],[622,927],[643,962],[664,977],[677,974],[692,961],[710,933],[729,905],[750,878],[772,855],[799,835],[824,823],[845,820],[860,825],[882,840],[903,860],[925,887],[946,905],[960,913],[978,918],[997,915],[1018,903],[1046,875],[1067,848],[1089,825],[1107,814],[1119,812],[1135,817],[1156,835],[1177,860],[1205,890],[1229,910],[1254,919],[1278,917],[1309,906],[1340,900],[1383,899],[1413,891],[1450,870],[1481,848],[1511,827],[1530,820],[1548,820],[1563,828],[1585,853],[1609,887],[1631,908],[1649,916],[1669,909]];
const cciRed = [[59,877],[73,883],[110,883],[141,883],[165,887],[193,888],[214,884],[239,876],[260,873],[276,877],[294,886],[318,896],[352,897],[380,891],[401,876],[429,852],[459,818],[484,801],[502,793],[517,794],[533,807],[557,842],[573,882],[588,922],[603,955],[617,982],[631,988],[643,984],[664,960],[689,922],[713,885],[738,855],[769,837],[796,818],[821,817],[836,821],[857,840],[885,873],[912,903],[937,919],[960,921],[984,912],[1006,888],[1027,858],[1052,830],[1073,810],[1089,804],[1104,813],[1125,833],[1150,862],[1171,888],[1199,913],[1217,920],[1245,920],[1266,912],[1288,900],[1309,898],[1343,902],[1364,898],[1395,887],[1432,863],[1462,840],[1493,818],[1511,812],[1530,821],[1548,843],[1572,878],[1591,905],[1606,922],[1618,925],[1627,922],[1649,902],[1669,883]];
const cciOrange = [[59,910],[67,927],[80,963],[91,982],[101,967],[110,957],[122,964],[132,963],[144,952],[153,933],[165,905],[178,896],[187,898],[195,927],[202,977],[211,988],[245,988],[257,980],[269,957],[282,938],[294,950],[306,980],[315,988],[423,988],[432,983],[444,978],[456,986],[470,988],[481,970],[490,937],[502,900],[511,860],[522,810],[530,794],[640,794],[652,800],[664,817],[680,840],[698,865],[716,900],[732,933],[744,967],[759,987],[796,988],[811,982],[833,960],[851,933],[876,907],[906,880],[925,857],[940,827],[960,795],[972,794],[981,801],[1000,815],[1027,845],[1052,870],[1079,887],[1092,892],[1104,877],[1119,847],[1128,817],[1138,797],[1147,794],[1229,794],[1243,800],[1260,805],[1285,823],[1306,850],[1334,887],[1349,923],[1361,967],[1373,987],[1474,988],[1487,983],[1502,977],[1520,960],[1539,927],[1551,887],[1563,837],[1572,808],[1585,794],[1661,794],[1672,799],[1700,799],[1716,807],[1733,822]];

// Monotone cubic interpolation of y at x over a list of knots
function sampler(pts) {
  const n = pts.length, d = [], m = [];
  for (let i = 0; i < n - 1; i++) d[i] = (pts[i + 1][1] - pts[i][1]) / (pts[i + 1][0] - pts[i][0]);
  m[0] = d[0];
  m[n - 1] = d[n - 2];
  for (let i = 1; i < n - 1; i++) m[i] = d[i - 1] * d[i] <= 0 ? 0 : 2 * d[i - 1] * d[i] / (d[i - 1] + d[i]);
  return x => {
    let i = 0;
    while (i < n - 2 && x > pts[i + 1][0]) i++;
    const h = pts[i + 1][0] - pts[i][0], t = (x - pts[i][0]) / h;
    return (2 * t ** 3 - 3 * t ** 2 + 1) * pts[i][1] + (t ** 3 - 2 * t ** 2 + t) * h * m[i] + (3 * t ** 2 - 2 * t ** 3) * pts[i + 1][1] + (t ** 3 - t ** 2) * h * m[i + 1];
  };
}
function perBar(pts) {
  const f = sampler(pts), a = pts[0][0], b = pts[pts.length - 1][0], out = [];
  for (let i = 0; i < BARS; i++) {
    const x = FIRST_X + i * STEP;
    if (x >= a && x <= b) out.push([x, f(x)]);
  }
  return out;
}
function bars(list) {
  return list.map((y, i) => [FIRST_X + i * STEP, y]);
}

function canvas(id, top, height) {
  const el = document.getElementById(id);
  const sx = el.clientWidth / 1920, sy = el.clientHeight / height;
  const X = x => +(x * sx).toFixed(1), Y = y => +((y - top) * sy).toFixed(1);
  const out = [];
  return {
    line: (x1, y1, x2, y2, c, extra = '') => out.push(`<path d="M${X(x1)} ${Y(y1)}L${X(x2)} ${Y(y2)}" stroke="${c}" fill="none" ${extra}/>`),
    poly: (pts, c, extra = '') => out.push(`<polyline points="${pts.map(p => X(p[0]) + ',' + Y(p[1])).join(' ')}" stroke="${c}" fill="none" ${extra}/>`),
    dots: (pts, c, w, h) => out.push(`<path fill="${c}" d="${pts.map(p => `M${Math.round(X(p[0]) - w / 2)} ${Math.round(Y(p[1]) - h / 2)}h${w}v${h}h${-w}z`).join('')}"/>`),
    box: (x, y, w, h, c) => out.push(`<rect x="${X(x)}" y="${Y(y)}" width="${X(w)}" height="${h}" fill="${c}"/>`),
    text: (x, y, s, c, anchor = 'start', cls = '') => out.push(`<text x="${X(x)}" y="${Y(y) + (cls ? 6 : 7)}" fill="${c}" text-anchor="${anchor}" class="${cls}">${s}</text>`),
    shape: (x, y, d, c) => out.push(`<path transform="translate(${X(x)} ${Y(y)})" d="${d}" fill="${c}"/>`),
    raw: s => out.push(s),
    X, Y,
    done: () => { el.innerHTML = out.join(''); }
  };
}
const crisp = 'shape-rendering="crispEdges"';

function grid(c, top, bottom) {
  for (let x = 76.5; x < 1740; x += 36) c.line(x, top, x, bottom, '#404040', `stroke-dasharray="9 3 3 3 3 3" stroke-dashoffset="20" ${crisp}`);
}
function axes(c, top, bottom) {
  c.line(1, top, 1, bottom, '#888', 'stroke-width="2"');
  c.line(1919, top, 1919, bottom, '#e8e8e8', 'stroke-width="2"');
  c.line(58.5, top, 58.5, bottom, RED);
  c.line(1840.5, top, 1840.5, bottom, RED);
}
function ticks(c, left, right) {
  left.forEach(y => c.line(52, y + .5, 59, y + .5, RED));
  right.forEach(y => c.line(1840, y + .5, 1847, y + .5, RED));
}

function drawPrice() {
  const c = canvas('price', 89, 469);
  grid(c, 109, 556);
  axes(c, 89, 558);
  const t = [120, 205, 291, 377, 463];
  ticks(c, t, t);
  ['14...', '14...', '14...', '13...', '13...'].forEach((s, i) => c.text(48, t[i], s, '#fff', 'end'));
  [[120, '144.00'], [205, '142.00'], [377, '138.00'], [463, '136.00']].forEach(l => c.text(1849, l[0], l[1], '#fff'));
  c.line(59, 462.5, 1838, 462.5, '#808000', `stroke-dasharray="4 3" ${crisp}`);
  c.text(1838, 451, '136.03', '#808000', 'end');
  c.poly(perBar(maBlue), BLUE, 'stroke-width="2"');
  maYellow.forEach(p => c.poly(perBar(p), '#ffff00', 'stroke-width="1.200"'));
  dotsRed.forEach(p => c.dots(perBar(p), RED, 3, 5));
  dotsGreen.forEach(p => c.dots(perBar(p), '#00ff00', 3, 5));
  const pts = bars(close);
  c.poly(pts, '#6666ff');
  c.dots(pts, CYAN, 3, 4);
  const up = 'M0 0l4 6h-3v7h-2v-7h-3z', down = 'M-2 0h4v10h3l-5 6-5-6h3z', play = 'M-2-4l5 4-5 4z';
  [[529, 308], [893, 417], [1533, 375]].forEach(p => c.shape(p[0], p[1], up, '#00ff00'));
  [[673, 345], [1345, 375]].forEach(p => c.shape(p[0], p[1], down, RED));
  [[524, 284], [889, 411], [1529, 360]].forEach(p => c.shape(p[0], p[1], play, '#00dd00'));
  [[669, 386], [1342, 396]].forEach(p => c.shape(p[0], p[1], play, '#dd0000'));
  [[529, 332, '1'], [672, 329, '-1'], [893, 441, '1'], [1344, 359, '-1'], [1533, 399, '1']].forEach(p => c.text(p[0], p[1], p[2], '#fff', 'middle', 'mark'));
  const box = (y, s, col) => { c.box(1841, y, 77, 23, col); c.text(1850, y + 11.5, s, '#000'); };
  box(291, '139.79', BLUE);
  box(284, '139.95', '#6666ff');
  box(317, '139.18', '#ffff00');
  box(328, '138.94', '#00ff00');
  c.done();
}

function drawMacd() {
  const c = canvas('macd', 558, 216);
  grid(c, 578, 772);
  axes(c, 558, 774);
  c.line(2, 558.5, 59, 558.5, RED);
  c.line(1840, 558.5, 1918, 558.5, RED);
  ticks(c, [600, 623, 646, 669, 692, 715, 738, 761], [600, 692, 738]);
  [[600, '6.00'], [646, '2.00'], [692, '-2....'], [738, '-6....']].forEach(l => c.text(48, l[0], l[1], '#fff', 'end'));
  [[600, '6.00'], [646, '2.00'], [692, '-2.00'], [738, '-6.00']].forEach(l => c.text(1848, l[0], l[1], '#fff'));
  c.line(59, 623.5, 1733, 623.5, OLIVE);
  c.line(59, 715.5, 1733, 715.5, OLIVE);
  c.line(59, 669.5, 1733, 669.5, BLUE, 'stroke-dasharray="3 3"');
  c.line(59, 677.5, 1733, 677.5, '#800080');
  c.line(59, 577.5, 1733, 577.5, RED);
  c.line(59, 761.5, 1733, 761.5, RED);
  c.poly(bars(leo), CYAN, 'stroke-width="1.200"');
  c.poly(perBar(macdTeal), '#008080', 'stroke-width="1.200"');
  c.poly(perBar(macdYellow), '#ffff00', 'stroke-width="1.200"');
  c.poly(perBar(macdDashed), '#ffff00', 'stroke-width="1.200" stroke-dasharray="3 4"');
  c.line(1540, 579, 1837, 614, '#ff00ff', 'stroke-width="1.200"');
  c.line(1456, 731, 1816, 577, '#ff00ff', 'stroke-width="1.200"');
  const box = (y, s, col) => { c.box(1841, y, 77, 23, col); c.text(1850, y + 12, s, '#000'); };
  box(568, '8.00', RED);
  box(614, '4.00', OLIVE);
  box(630, '2.63', CYAN);
  box(660, '0.00', BLUE);
  box(706, '-4.00', OLIVE);
  box(752, '-8.00', RED);
  c.done();
}

function drawCci() {
  const c = canvas('cci', 774, 216);
  grid(c, 793, 988);
  axes(c, 774, 990);
  c.line(2, 774.5, 59, 774.5, RED);
  c.line(1840, 774.5, 1918, 774.5, RED);
  ticks(c, [795, 811, 828, 844, 860, 926, 943, 959, 975], [796, 856, 886, 916, 946, 975]);
  [[811, '2.00'], [861, '0.50'], [960, '-2....']].forEach(l => c.text(48, l[0], l[1], '#fff', 'end'));
  [[887, '0.00'], [946, '-100.00']].forEach(l => c.text(1848, l[0], l[1], '#fff'));
  const line = perBar(cciLine);
  c.raw(`<path stroke="#4a4a4a" ${crisp} d="${line.map(p => `M${c.X(p[0])} ${c.Y(886)}V${c.Y(p[1])}`).join('')}"/>`);
  c.line(59, 814.5, 1733, 814.5, '#909090');
  c.line(59, 958.5, 1733, 958.5, '#909090');
  c.line(59, 877.5, 1733, 877.5, '#800080');
  c.poly(perBar(cciBlue), BLUE, 'stroke-width="1.200"');
  c.poly(perBar(cciRed), RED, 'stroke-width="1.200" stroke-dasharray="3 3"');
  c.poly(perBar(cciOrange), '#cc6600', 'stroke-width="1.200" stroke-dasharray="3 3"');
  [['hi', 774, 814.5, RED], ['mid', 814.5, 958.5, '#c0c0c0'], ['lo', 958.5, 990, CYAN]].forEach(b => {
    c.raw(`<clipPath id="band-${b[0]}"><rect x="0" y="${c.Y(b[1])}" width="100%" height="${c.Y(b[2]) - c.Y(b[1])}"/></clipPath>`);
    c.poly(line, b[3], `stroke-width="1.200" clip-path="url(#band-${b[0]})"`);
  });
  const dot = (x, y, col) => c.raw(`<circle cx="${c.X(x)}" cy="${c.Y(y)}" r="4" fill="${col}"/>`);
  [[652, 801], [980, 800], [1244, 800], [1672, 799], [1700, 799]].forEach(p => dot(p[0], p[1], CYAN));
  [[257, 982], [432, 984], [476, 979], [808, 983], [1488, 984]].forEach(p => dot(p[0], p[1], RED));
  const lbox = (y, s, col) => { c.box(2, y, 56, 23, col); c.text(49, y + 12, s, '#000', 'end'); };
  lbox(868, '0.00', '#800080');
  lbox(875, '-0.20', RED);
  lbox(900, '-0.98', BLUE);
  const rbox = (y, s, col) => { c.box(1841, y, 77, 23, col); c.text(1850, y + 12, s, '#000'); };
  rbox(805, '120.00', '#808080');
  rbox(817, '100.33', '#a0a0a0');
  rbox(949, '-120.00', '#808080');
  c.done();
}

function drawDates() {
  const c = canvas('dates', 990, 28);
  c.line(1, 990, 1, 1018, '#888', 'stroke-width="2"');
  c.line(1919, 990, 1919, 1018, '#e8e8e8', 'stroke-width="2"');
  c.line(2, 990.5, 1918, 990.5, RED);
  c.line(89.5, 990, 89.5, 995, RED);
  c.line(112.5, 990, 112.5, 1001, RED);
  c.text(138, 1007, '9/16', '#fff', 'middle');
  ['9/21', '9/23', '9/26', '9/28', '9/30', '10/04', '10/06', '10/10', '10/12', '10/14', '10/18', '10/19', '10/21', '10/25', '10/27', '10/31', '11/02', '11/04', '11/08', '11/10', '11/11', '11/15', '11/17', '15:00'].forEach((s, i) => {
    const x = 224.5 + i * 68;
    c.line(x, 990, x, 995, RED);
    c.text(x + 26, 1007, s, '#fff', 'middle');
  });
  c.done();
}

function drawAll() { drawPrice(); drawMacd(); drawCci(); drawDates(); }
drawAll();
window.addEventListener('resize', drawAll);
```
